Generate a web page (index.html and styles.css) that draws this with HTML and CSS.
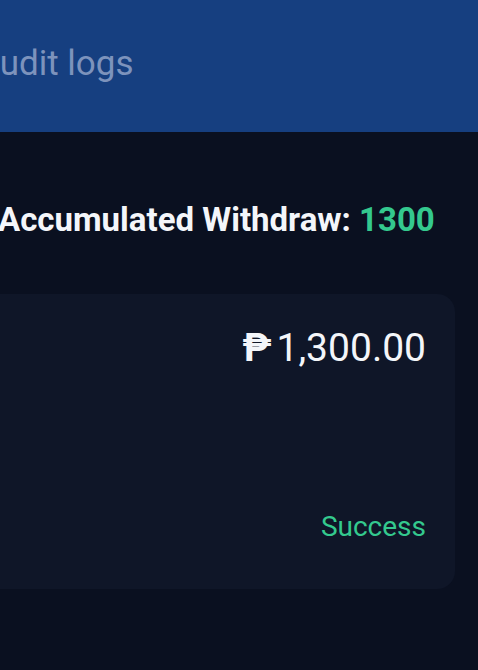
FILE: index.html
```html
<!DOCTYPE html>
<html lang="en">
<head>
    <meta charset="UTF-8">
    <meta name="viewport" content="width=device-width, initial-scale=1.0">
    <title>Audit logs</title>
    <link rel="stylesheet" href="styles.css">
</head>
<body>

    <div class="page">
        <header class="top-bar">
            <h1>Audit logs</h1>
        </header>

        <main class="content">
            <h2 class="total">Accumulated Withdraw: <span class="total-value">1300</span></h2>

            <div class="log-card">
                <div class="amount"><span class="peso">₱</span>1,300.00</div>
                <div class="status">Success</div>
            </div>
        </main>
    </div>

</body>
</html>
```

FILE: styles.css
```css
* { margin: 0; padding: 0; box-sizing: border-box; font-family: 'Roboto', 'Liberation Sans', sans-serif; }

body {
    background: #0a1020;
    height: 100vh;
    overflow: hidden;
}

/* page is wider than the window, its left side is cut off */
.page {
    margin-left: -42px;
    width: calc(100% + 42px);
}

/* --- HEADER --- */
.top-bar {
    background: #163f80;
    height: 132px;
    display: flex;
    align-items: center;
    padding: 0 24px 6px 19px;
}

.top-bar h1 {
    font-size: 35px;
    font-weight: 400;
    color: #7d93bc;
}

/* --- CONTENT --- */
.content {
    padding: 0 23px 0 24px;
}

.total {
    font-size: 33px;
    font-weight: 700;
    color: #f4f6fa;
    padding: 68px 0 0 16px;
    height: 162px;
    white-space: nowrap;
}

.total-value { color: #34c98e; }

.log-card {
    background: #0f1628;
    border-radius: 18px;
    height: 295px;
    padding: 31px 29px 46px;
    display: flex;
    flex-direction: column;
    align-items: flex-end;
    justify-content: space-between;
}

.amount {
    font-size: 39px;
    color: #f4f6fa;
}

.peso {
    font-weight: 700;
    margin-right: 5px;
}

.status {
    font-size: 28px;
    color: #34c98e;
}
```
